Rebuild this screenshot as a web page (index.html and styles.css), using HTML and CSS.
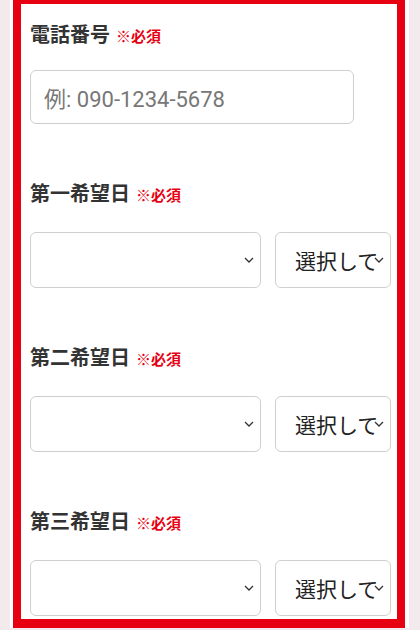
FILE: index.html
```html
<!DOCTYPE html>
<html lang="ja">
<head>
<meta charset="utf-8">
<title>予約フォーム</title>
<link rel="stylesheet" href="styles.css">
</head>
<body>
<div class="frame">
  <form class="box">
    <div class="field">
      <div class="label label-tel">電話番号<span class="req">※必須</span></div>
      <div class="input"><span class="placeholder">例: 090-1234-5678</span></div>
    </div>
    <div class="field">
      <div class="label">第一希望日<span class="req">※必須</span></div>
      <div class="row">
        <div class="select select-date">
          <svg class="chev" width="10" height="6" viewBox="0 0 10 6"><path d="M1 1 L5 5 L9 1" fill="none" stroke="#333" stroke-width="1.3"/></svg>
        </div>
        <div class="select select-time">
          <span class="select-text">選択してください</span>
          <svg class="chev" width="10" height="6" viewBox="0 0 10 6"><path d="M1 1 L5 5 L9 1" fill="none" stroke="#333" stroke-width="1.3"/></svg>
        </div>
      </div>
    </div>
    <div class="field">
      <div class="label">第二希望日<span class="req">※必須</span></div>
      <div class="row">
        <div class="select select-date">
          <svg class="chev" width="10" height="6" viewBox="0 0 10 6"><path d="M1 1 L5 5 L9 1" fill="none" stroke="#333" stroke-width="1.3"/></svg>
        </div>
        <div class="select select-time">
          <span class="select-text">選択してください</span>
          <svg class="chev" width="10" height="6" viewBox="0 0 10 6"><path d="M1 1 L5 5 L9 1" fill="none" stroke="#333" stroke-width="1.3"/></svg>
        </div>
      </div>
    </div>
    <div class="field field-last">
      <div class="label">第三希望日<span class="req">※必須</span></div>
      <div class="row">
        <div class="select select-date">
          <svg class="chev" width="10" height="6" viewBox="0 0 10 6"><path d="M1 1 L5 5 L9 1" fill="none" stroke="#333" stroke-width="1.3"/></svg>
        </div>
        <div class="select select-time">
          <span class="select-text">選択してください</span>
          <svg class="chev" width="10" height="6" viewBox="0 0 10 6"><path d="M1 1 L5 5 L9 1" fill="none" stroke="#333" stroke-width="1.3"/></svg>
        </div>
      </div>
    </div>
  </form>
</div>
</body>
</html>
```
FILE: styles.css
```css
html, body {
  margin: 0;
  padding: 0;
  background: #f3eaed;
  height: 630px;
  overflow: hidden;
}
.frame {
  margin-left: 10px;
  width: 392px;
  padding: 0 4px 0 3px;
  background: #ffffff;
}
.box {
  box-sizing: border-box;
  width: 392px;
  height: 628px;
  margin: 0;
  border: 8px solid #e60012;
  border-top-width: 4px;
  border-bottom-width: 9px;
  background: #fff;
  padding: 16px 7px 0 9px;
  font-family: Roboto, "Noto Sans CJK JP", sans-serif;
  color: #333;
}
.field {
  margin-bottom: 55px;
}
.field-last {
  margin-bottom: 0;
}
.label {
  font-family: "Noto Sans CJK JP", sans-serif;
  font-weight: 700;
  font-size: 20px;
  line-height: 28px;
  height: 28px;
  color: #333;
  margin-bottom: 25px;
  white-space: nowrap;
}
.label-tel {
  margin-bottom: 22px;
}
.req {
  font-size: 15px;
  color: #e60012;
  margin-left: 6px;
  font-weight: 700;
}
.input {
  box-sizing: border-box;
  width: 324px;
  height: 54px;
  border: 1px solid #cfcfcf;
  border-radius: 6px;
  padding-left: 13px;
  display: flex;
  align-items: center;
}
.placeholder {
  font-family: Roboto, "Noto Sans CJK JP", sans-serif;
  font-size: 22px;
  color: #777;
}
.row {
  display: flex;
  gap: 14px;
}
.select {
  box-sizing: border-box;
  position: relative;
  flex: none;
  height: 56px;
  border: 1px solid #cfcfcf;
  border-radius: 6px;
  background: #fff;
  overflow: hidden;
  display: flex;
  align-items: center;
}
.select-date {
  width: 231px;
}
.select-time {
  width: 116px;
  padding-left: 19px;
}
.select-text {
  display: block;
  width: 85px;
  overflow: hidden;
  font-family: "Noto Sans CJK JP", sans-serif;
  font-size: 21px;
  line-height: 30px;
  color: #222;
  white-space: nowrap;
}
.chev {
  position: absolute;
  right: 6px;
  top: 24px;
}
```
